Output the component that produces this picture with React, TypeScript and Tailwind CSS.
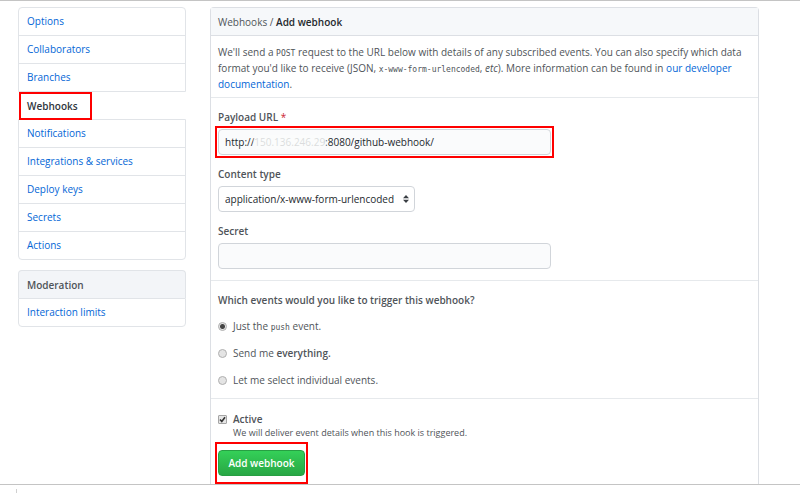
import { ReactNode } from 'react';
import clsx from 'clsx';

const topLinks = ['Options', 'Collaborators', 'Branches'];
const bottomLinks = ['Notifications', 'Integrations & services', 'Deploy keys', 'Secrets', 'Actions'];

export default function App() {
  return (
    <div className="bg-white font-['Open_Sans','Noto_Sans',sans-serif] text-[10px] leading-4 text-[#4f5459]">
      <div className="flex items-start gap-6 overflow-hidden border-y border-[#c4c4c4] pt-1.5 pr-[41px] pl-[18px]">
        <Sidebar />
        <main className="min-w-0 flex-1 rounded-t-sm border border-b-0 border-[#dcdfe4]">
          <h1 className="border-b border-[#dcdfe4] bg-[#f6f8fa] px-[7px] pt-1.5 pb-[5px]">
            Webhooks / <span className="font-semibold text-[#24292e]">Add webhook</span>
          </h1>
          <WebhookForm />
        </main>
      </div>
      {/* edge of the next block */}
      <div className="ml-4 h-2 pt-1">
        <div className="h-1 w-px bg-[#d0d0d0]" />
      </div>
    </div>
  );
}

function Sidebar() {
  return (
    <aside className="w-[168px] flex-shrink-0">
      <nav aria-label="Settings">
        <MenuBox links={topLinks} className="rounded-t-sm" />
        <div className="flex h-[27px] items-center px-[9px]">
          <a href="#webhooks" aria-current="page" className="relative font-semibold text-[#2f363d]">
            Webhooks
            <Highlight className="-inset-y-1.5 -right-3.5 -left-2" />
          </a>
        </div>
        <MenuBox links={bottomLinks} className="rounded-b-sm" />
      </nav>
      <nav aria-label="Moderation" className="mt-2.5">
        <h2 className="flex h-7 items-center rounded-t-sm border border-b-0 border-[#e1e4e8] bg-[#f3f5f8] px-2 font-semibold">
          Moderation
        </h2>
        <MenuBox links={['Interaction limits']} className="rounded-b-sm" />
      </nav>
    </aside>
  );
}

function MenuBox({ links, className }: { links: string[]; className?: string }) {
  return (
    <ul className={clsx('divide-y divide-[#e1e4e8] border border-[#e1e4e8]', className)}>
      {links.map((link) => (
        <li key={link}>
          <a href="#settings" className="block px-2 pt-[5px] pb-1.5 text-[#0366d6]">
            {link}
          </a>
        </li>
      ))}
    </ul>
  );
}

function WebhookForm() {
  return (
    <form onSubmit={(e) => e.preventDefault()}>
      <p className="border-b border-[#e6e9ec] px-[7px] pt-2 pb-[5px]">
        We'll send a <Code>POST</Code> request to the URL below with details of any subscribed events. You can also
        specify which data format you'd like to receive (JSON, <Code>x-www-form-urlencoded</Code>, <em>etc</em>). More
        information can be found in{' '}
        <a href="#docs" className="text-[#0366d6]">
          our developer documentation
        </a>
        .
      </p>

      <div className="border-b border-[#e6e9ec] px-[7px] py-[11px]">
        <label htmlFor="url" className="block font-semibold">
          Payload URL <span className="font-normal text-[#cb2431]">*</span>
        </label>
        <div className="relative mt-1 w-[333px] max-w-full">
          <input
            id="url"
            type="text"
            defaultValue="http://150.136.246.29:8080/github-webhook/"
            className="block h-[26px] w-full rounded-sm border border-[#d1d5da] bg-[#fafbfc] px-1.5 text-[#24292e]"
          />
          {/* masks the host address */}
          <span className="absolute inset-y-1 left-9 w-[72px] bg-[#fafbfc]/85 blur-[1px]" />
          <Highlight className="-inset-[3px]" />
        </div>

        <label htmlFor="type" className="mt-[11px] block font-semibold">
          Content type
        </label>
        <div className="relative mt-1 w-[197px]">
          <select
            id="type"
            className="block h-[26px] w-full appearance-none rounded-sm border border-[#d1d5da] bg-white px-1.5 text-[#24292e]"
          >
            <option>application/x-www-form-urlencoded</option>
            <option>application/json</option>
          </select>
          <svg viewBox="0 0 6 8" className="pointer-events-none absolute top-[9px] right-1.5 h-2 w-1.5 fill-[#3a3f44]">
            <path d="M3 0 6 3.3H0zM0 4.7H6L3 8z" />
          </svg>
        </div>

        <label htmlFor="secret" className="mt-[11px] block font-semibold">
          Secret
        </label>
        <input
          id="secret"
          type="text"
          className="mt-1 block h-[26px] w-[333px] max-w-full rounded-sm border border-[#d1d5da] bg-[#fafbfc] px-1.5"
        />
      </div>

      <fieldset className="border-b border-[#e6e9ec] px-[7px] pt-[11px] pb-2.5">
        <legend className="float-left w-full font-semibold">Which events would you like to trigger this webhook?</legend>
        <div className="clear-both flex flex-col gap-[11px] pt-2.5">
          <Radio id="push" defaultChecked>
            Just the <Code>push</Code> event.
          </Radio>
          <Radio id="all">
            Send me <strong className="font-semibold">everything.</strong>
          </Radio>
          <Radio id="some">Let me select individual events.</Radio>
        </div>
      </fieldset>

      <div className="px-[7px] pt-3 pb-2">
        <div className="flex items-center gap-1.5">
          <span className="relative flex">
            <input
              id="active"
              type="checkbox"
              defaultChecked
              className="peer size-[9px] appearance-none rounded-[1px] border border-[#a5a5a5] bg-[#e6e6e6]"
            />
            <svg
              viewBox="0 0 9 9"
              className="pointer-events-none absolute inset-0 hidden size-[9px] fill-none stroke-[#333] stroke-[1.6] peer-checked:block"
            >
              <path d="M2 4.5 3.8 6.5 7 2.2" />
            </svg>
          </span>
          <label htmlFor="active" className="font-semibold">
            Active
          </label>
        </div>
        <p className="pl-[15px] text-[9px] leading-3">We will deliver event details when this hook is triggered.</p>
        <div className="relative mt-[11px] w-[87px]">
          <button
            type="submit"
            className="block h-[26px] w-full rounded-sm border border-[#279f43] bg-linear-to-b from-[#34d058] to-[#28a745] font-semibold whitespace-nowrap text-white"
          >
            Add webhook
          </button>
          <Highlight className="-inset-x-[3px] -inset-y-2" />
        </div>
      </div>
    </form>
  );
}

function Radio({ id, defaultChecked, children }: { id: string; defaultChecked?: boolean; children: ReactNode }) {
  return (
    <div className="flex items-center gap-1.5">
      <input
        id={id}
        type="radio"
        name="events"
        defaultChecked={defaultChecked}
        className="size-[9px] appearance-none rounded-full border border-[#b0b0b0] bg-[#e4e4e4] checked:bg-[radial-gradient(circle,#444_0_2px,#e4e4e4_3px)]"
      />
      <label htmlFor={id}>{children}</label>
    </div>
  );
}

function Code({ children }: { children: ReactNode }) {
  return <code className="font-['DejaVu_Sans_Mono',monospace] text-[8px] leading-none">{children}</code>;
}

function Highlight({ className }: { className: string }) {
  return <span className={clsx('pointer-events-none absolute border-2 border-[#fe0000]', className)} />;
}
